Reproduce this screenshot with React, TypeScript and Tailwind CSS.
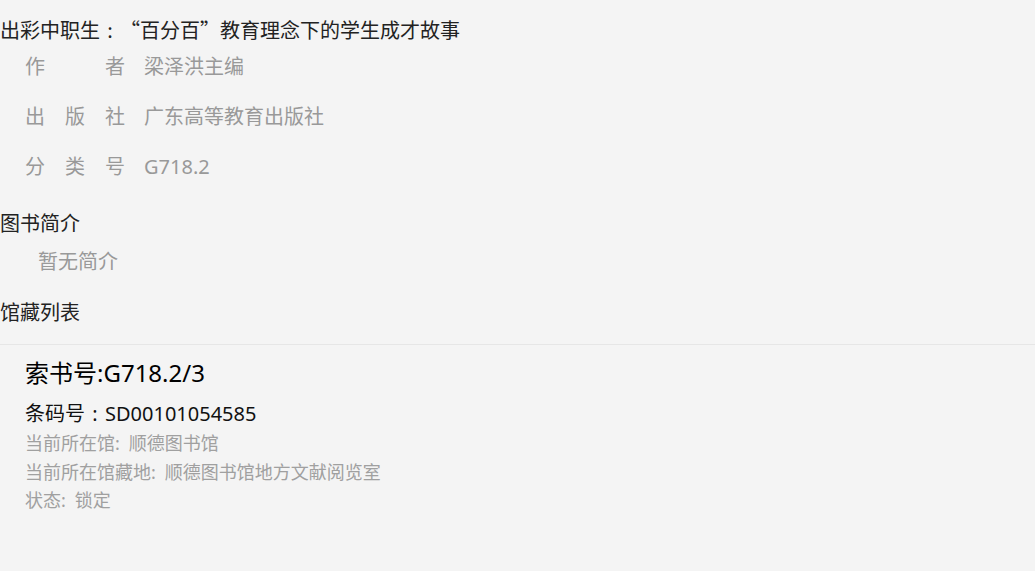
const FONT = { fontFamily: '"Noto Sans", "Noto Sans CJK SC", sans-serif' };
const CJK = { fontFamily: '"Noto Sans CJK SC", sans-serif' };

// full-width colon, centred in its own em cell
const Colon = () => <span className="inline-block w-[1em] text-center">:</span>;

const infoRows = [
  { label: '作者', value: '梁泽洪主编' },
  { label: '出版社', value: '广东高等教育出版社' },
  { label: '分类号', value: 'G718.2' },
];

const holdingLines = [
  { label: '当前所在馆:', value: '顺德图书馆' },
  { label: '当前所在馆藏地:', value: '顺德图书馆地方文献阅览室' },
  { label: '状态:', value: '锁定' },
];

export default function App() {
  return (
    <div className="w-full min-h-[571px] bg-[#f4f4f4] pt-[18px]" style={FONT}>
      <h1 className="text-[20px] leading-[24px] text-[#222]" style={CJK}>
        出彩中职生<Colon />“百分百”教育理念下的学生成才故事
      </h1>

      <div className="pl-[25px]">
        {infoRows.map((r) => (
          <div key={r.label} className="flex items-center h-[50px] text-[20px] text-[#999]">
            <span className="w-[100px] [text-align:justify] [text-align-last:justify]">{r.label}</span>
            <span className="ml-[19px]">{r.value}</span>
          </div>
        ))}
      </div>

      <h2 className="mt-[20px] text-[20px] leading-[24px] text-[#222]">图书简介</h2>
      <p className="mt-[14px] pl-[38px] text-[20px] leading-[24px] text-[#999]">暂无简介</p>

      <h2 className="mt-[27px] text-[20px] leading-[24px] text-[#222]">馆藏列表</h2>

      <div className="mt-[19px] border-t border-[#e6e6e6] pl-[25px]">
        <div className="mt-[13px] text-[24px] leading-[30px] text-black">索书号:G718.2/3</div>
        <div className="mt-[14px] text-[20px] leading-[24px] text-[#111]">
          条码号<Colon />SD00101054585
        </div>
        <div className="mt-[3px] text-[18px] leading-[28.5px] text-[#a0a0a0]">
          {holdingLines.map((l) => (
            <div key={l.label}>
              {l.label}
              <span className="ml-[9px]">{l.value}</span>
            </div>
          ))}
        </div>
      </div>
    </div>
  );
}
